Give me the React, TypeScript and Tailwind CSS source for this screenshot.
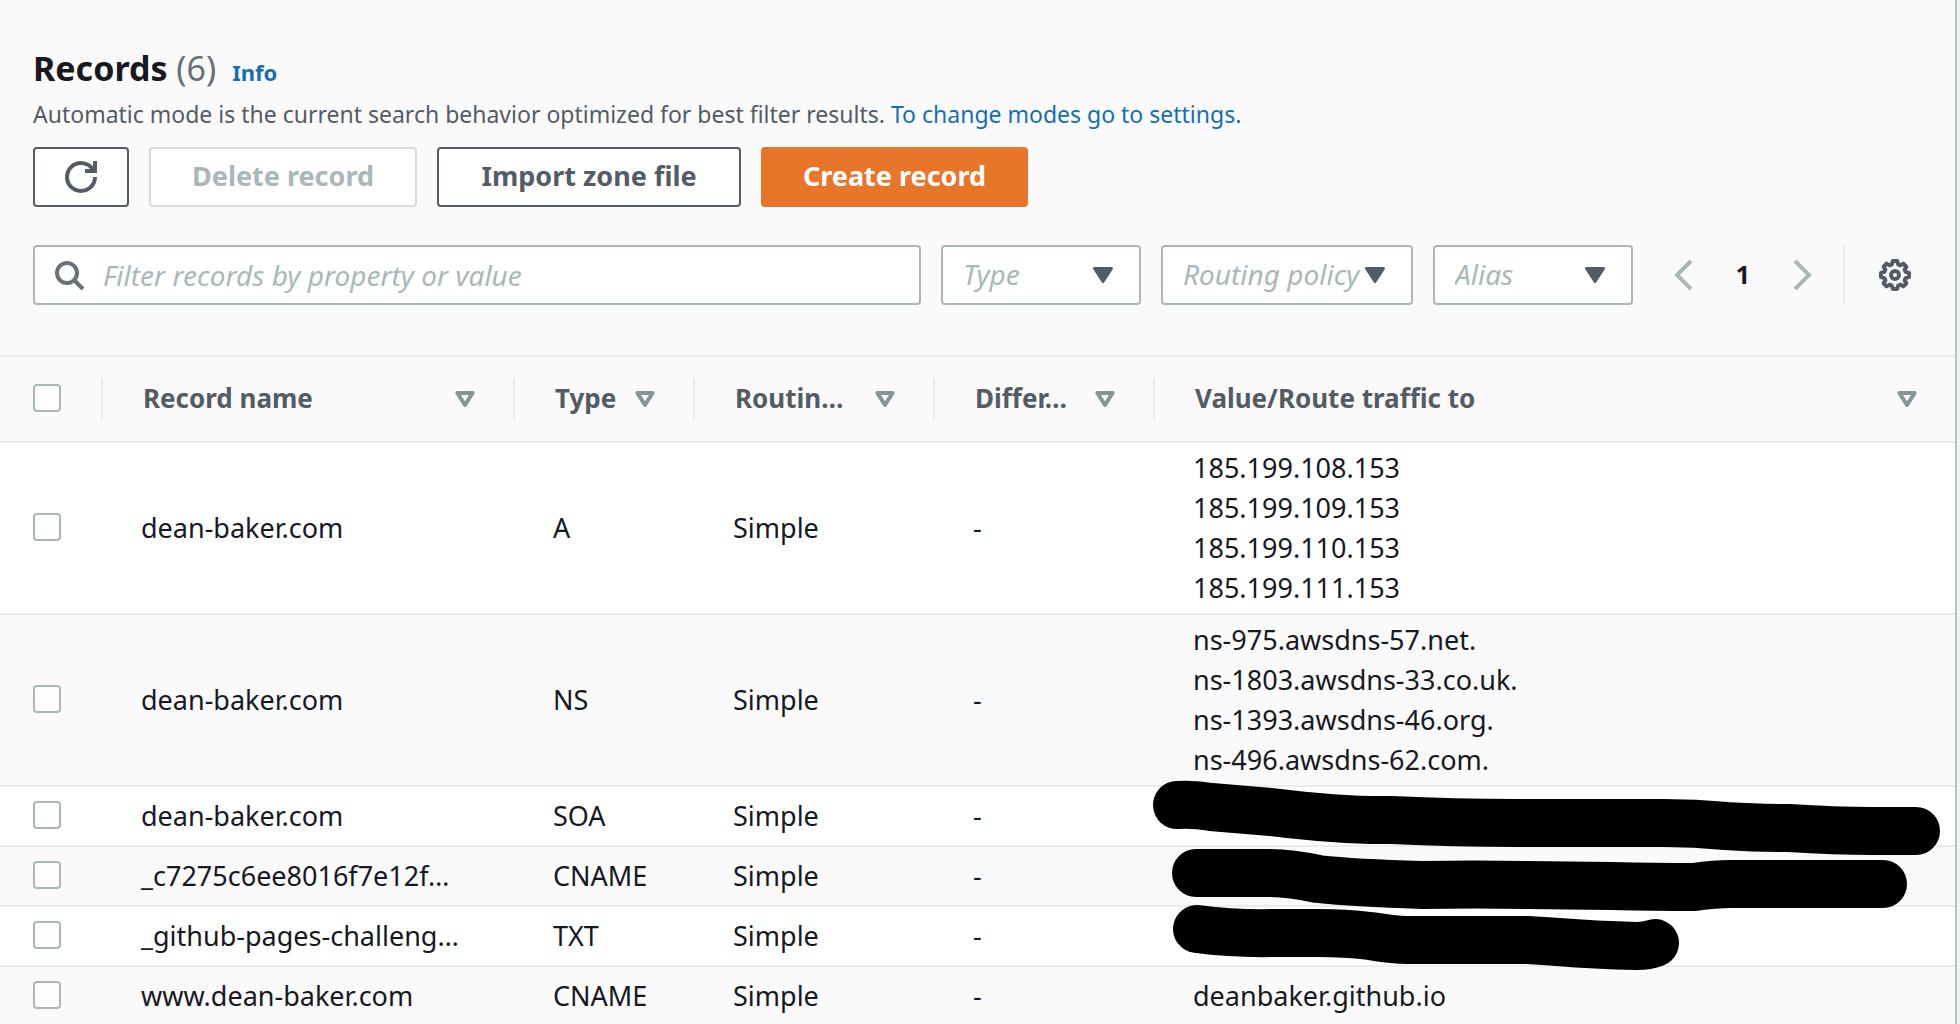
import type { ReactNode } from "react";

function SortIcon() {
  return (
    <svg width="20" height="16" viewBox="0 0 20 16" className="shrink-0" aria-hidden="true">
      <path d="M2.4 2h15.2L10 14z" fill="none" stroke="#879596" strokeWidth="4" strokeLinejoin="round" />
    </svg>
  );
}

function CheckBox({ label }: { label: string }) {
  return (
    <input
      type="checkbox"
      aria-label={label}
      className="mb-[2px] block size-7 appearance-none rounded-[4px] border-2 border-[#aab7b8] bg-white checked:bg-[#0073bb]"
    />
  );
}

function FilterSelect({ label, className }: { label: string; className: string }) {
  return (
    <div className={`relative ${className}`}>
      <select
        aria-label={label}
        className="h-[60px] w-full appearance-none rounded-[4px] border-2 border-[#aab7b8] bg-white pb-[2px] pl-5 text-[28px] italic text-[#aab7b8]"
      >
        <option>{label}</option>
      </select>
      <svg width="20" height="16" viewBox="0 0 20 16" className="pointer-events-none absolute top-[22px] right-7" aria-hidden="true">
        <path d="M1.5 1.5h17L10 14.5z" fill="#545b64" stroke="#545b64" strokeWidth="3" strokeLinejoin="round" />
      </svg>
    </div>
  );
}

function Redaction({ d }: { d: string }) {
  return (
    <svg width="800" height="60" className="pointer-events-none absolute top-0 left-0 overflow-visible" aria-hidden="true">
      <path d={d} fill="none" stroke="#000" strokeWidth="48" strokeLinecap="round" strokeLinejoin="round" />
    </svg>
  );
}

type Rec = { name: string; type: string; value: ReactNode };

const lines = (items: string[]) => items.map((t) => <div key={t}>{t}</div>);

const records: Rec[] = [
  {
    name: "dean-baker.com",
    type: "A",
    value: lines(["185.199.108.153", "185.199.109.153", "185.199.110.153", "185.199.111.153"]),
  },
  {
    name: "dean-baker.com",
    type: "NS",
    value: lines(["ns-975.awsdns-57.net.", "ns-1803.awsdns-33.co.uk.", "ns-1393.awsdns-46.org.", "ns-496.awsdns-62.com."]),
  },
  {
    name: "dean-baker.com",
    type: "SOA",
    value: <Redaction d="M22 18Q40 17 56 20L116 25Q190 34 236 33Q300 36 362 36H508Q540 36 571 39Q600 41 634 41Q680 44 717 44H761" />,
  },
  {
    name: "_c7275c6ee8016f7e12f…",
    type: "CNAME",
    value: <Redaction d="M41 26H113Q135 26 163 32Q200 36 267 38Q320 37 372 38L456 39Q500 40 539 40Q560 37 576 37H728" />,
  },
  {
    name: "_github-pages-challeng…",
    type: "TXT",
    value: <Redaction d="M42 22Q80 27 121 26H163Q190 26 215 29Q240 33 252 33H372Q390 34 403 35Q440 38 482 39Q492 39 500 36" />,
  },
  { name: "www.dean-baker.com", type: "CNAME", value: "deanbaker.github.io" },
];

const headers = ["Record name", "Type", "Routin…", "Differ…", "Value/Route traffic to"];

export default function App() {
  return (
    <div className="h-screen overflow-hidden bg-[#f2f3f3] pr-[3px] font-['Noto_Sans','Open_Sans',sans-serif] text-[27px] leading-10 text-[#16191f]">
      <main className="min-h-full border-r-2 border-[#b9c4c4] bg-[#fafafa]">
        <header className="px-[33px] pt-11">
          <div className="flex items-baseline">
            <h1 className="text-[34px] leading-[48px] font-bold">
              Records <span className="font-normal text-[#687078]">(6)</span>
            </h1>
            <a href="#info" className="ml-4 text-[22px] font-bold text-[#146eb4]">Info</a>
          </div>
          <p className="mt-1 text-[23px] leading-9 text-[#545b64]">
            Automatic mode is the current search behavior optimized for best filter results.{" "}
            <a href="#settings" className="text-[#146eb4]">To change modes go to settings.</a>
          </p>
          <div className="mt-[15px] flex gap-5 font-bold">
            <button aria-label="Refresh" className="flex h-[60px] w-24 items-center justify-center rounded-[4px] border-2 border-[#545b64] bg-white">
              <svg width="32" height="32" viewBox="0 0 16 16" fill="none" stroke="#545b64" strokeWidth="2" aria-hidden="true">
                <path d="M15 8c0 3.900-3.100 7-7 7s-7-3.100-7-7 3.100-7 7-7c2.800 0 5.300 1.700 6.400 4" />
                <path d="M10 5h5V0" />
              </svg>
            </button>
            <button disabled className="h-[60px] w-[268px] rounded-[4px] border-2 border-[#d5dbdb] bg-white pb-[2px] text-[#aab7b8]">Delete record</button>
            <button className="h-[60px] w-[304px] rounded-[4px] border-2 border-[#545b64] bg-white pb-[2px] text-[#545b64]">Import zone file</button>
            <button className="h-[60px] w-[267px] rounded-[4px] bg-[#e7762b] pb-[2px] text-white">Create record</button>
          </div>
          <div className="mt-[38px] flex items-center gap-5">
            <label className="flex h-[60px] min-w-0 flex-1 items-center rounded-[4px] border-2 border-[#aab7b8] bg-white pl-[18px]">
              <svg width="32" height="32" viewBox="0 0 16 16" fill="none" stroke="#687078" strokeWidth="2" aria-hidden="true">
                <circle cx="7" cy="7" r="5" />
                <path d="m15 15-4.500-4.500" />
              </svg>
              <input
                type="text"
                aria-label="Filter records"
                placeholder="Filter records by property or value"
                className="ml-[18px] min-w-0 flex-1 text-[28px] italic outline-none placeholder:text-[#aab7b8]"
              />
            </label>
            <FilterSelect label="Type" className="w-[200px]" />
            <FilterSelect label="Routing policy" className="w-[252px]" />
            <FilterSelect label="Alias" className="w-[200px]" />
            <nav aria-label="Pagination" className="ml-5 flex items-center text-[25px] font-bold">
              <button aria-label="Previous page">
                <svg width="20" height="32" viewBox="0 0 20 32" fill="none" stroke="#aab7b8" strokeWidth="4" aria-hidden="true"><path d="M18 2 4 16l14 14" /></svg>
              </button>
              <button className="w-[100px] pb-[2px]">1</button>
              <button aria-label="Next page">
                <svg width="20" height="32" viewBox="0 0 20 32" fill="none" stroke="#aab7b8" strokeWidth="4" aria-hidden="true"><path d="m2 2 14 14L2 30" /></svg>
              </button>
            </nav>
            <div className="ml-[10px] flex h-[60px] items-center border-l-2 border-[#eaeded] pr-[11px] pl-[34px]">
              <button aria-label="Preferences">
                <svg width="32" height="32" viewBox="0 0 16 16" fill="none" stroke="#545b64" strokeWidth="2" strokeLinejoin="round" aria-hidden="true">
                  <path d="M6.900 1h2.200l.5 1.700 1.100.5 1.500-.9 1.500 1.500-.9 1.500.5 1.100 1.700.5v2.200l-1.700.5-.5 1.100.9 1.500-1.500 1.500-1.500-.9-1.100.5-.5 1.700H6.900l-.5-1.700-1.100-.5-1.500.9-1.500-1.500.9-1.500-.5-1.100-1.700-.5V6.900l1.700-.5.5-1.100-.9-1.500 1.500-1.500 1.500.9 1.100-.5z" />
                  <circle cx="8" cy="8" r="2" />
                </svg>
              </button>
            </div>
          </div>
        </header>
        <div className="mt-[50px] border-t-2 border-[#eaeded]">
          <table className="w-full table-fixed border-separate border-spacing-0 text-left">
            <colgroup>
              <col className="w-[103px]" />
              <col className="w-[412px]" />
              <col className="w-[180px]" />
              <col className="w-[240px]" />
              <col className="w-[220px]" />
              <col />
            </colgroup>
            <thead>
              <tr className="text-[26px] text-[#545b64]">
                <th className="h-[86px] border-b-2 border-[#eaeded] p-0">
                  <div className="flex h-[42px] items-center border-r-2 border-[#eaeded] pl-[33px]">
                    <CheckBox label="Select all records" />
                  </div>
                </th>
                {headers.map((h, i) => (
                  <th key={h} className="border-b-2 border-[#eaeded] p-0">
                    <div
                      className={`flex h-[42px] items-center justify-between pr-[38px] pl-10 whitespace-nowrap ${
                        i < headers.length - 1 ? "border-r-2 border-[#eaeded]" : ""
                      }`}
                    >
                      <span className="pb-[2px]">{h}</span>
                      <SortIcon />
                    </div>
                  </th>
                ))}
              </tr>
            </thead>
            <tbody>
              {records.map((r, i) => (
                <tr key={i} className="bg-white even:bg-[#fafafa] [&>td]:border-b-2 [&>td]:border-[#eaeded] [&>td]:py-[5px]">
                  <td className="h-[60px] pl-[33px]">
                    <CheckBox label={`Select ${r.name} ${r.type}`} />
                  </td>
                  <td className="pl-[38px] whitespace-nowrap">{r.name}</td>
                  <td className="pl-[38px]">{r.type}</td>
                  <td className="pl-[38px]">Simple</td>
                  <td className="pl-[38px]">-</td>
                  <td className="relative pl-[38px]">{r.value}</td>
                </tr>
              ))}
            </tbody>
          </table>
        </div>
      </main>
    </div>
  );
}
